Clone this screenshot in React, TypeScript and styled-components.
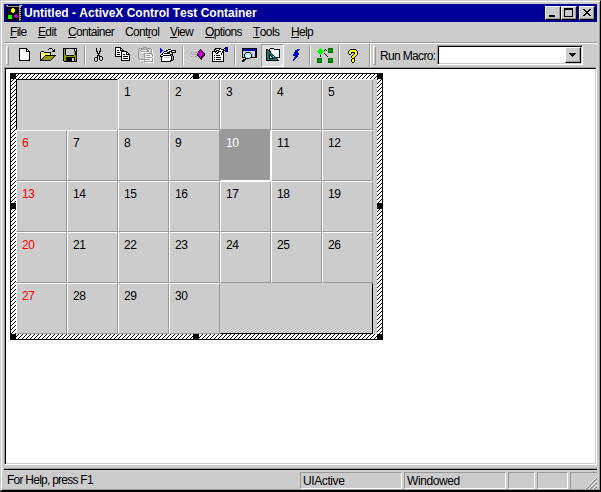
import React from "react";
import styled, { createGlobalStyle, css } from "styled-components";

const FACE = "#cccccc";
const SHADOW = "#999999";

const GlobalStyle = createGlobalStyle`
  * { box-sizing: border-box; }
  html, body { margin: 0; padding: 0; background: ${FACE}; overflow: hidden; }
  body { font: 12px/14px "Liberation Sans", Arial, sans-serif; font-kerning: none; color: #000; }
`;

const HATCH = `url("data:image/svg+xml,%3Csvg xmlns='http://www.w3.org/2000/svg' width='4' height='4' shape-rendering='crispEdges'%3E%3Cpath fill='%23fff' d='M0 0h4v4H0z'/%3E%3Cpath d='M0 3h1v1H0zM1 2h1v1H1zM2 1h1v1H2zM3 0h1v1H3z'/%3E%3C/svg%3E")`;

const Window = styled.div`
  width: 601px;
  height: 492px;
  display: flex;
  flex-direction: column;
  background: ${FACE};
  padding: 2px 2px 0 2px;
  border-style: solid;
  border-width: 1px 1px 2px 1px;
  border-color: ${FACE} #000 #000 ${FACE};
  box-shadow: inset 1px 1px #fff, inset -1px -1px ${SHADOW};
`;

const TitleBar = styled.header`
  height: 18px;
  margin: 1px 0 0 1px;
  width: 593px;
  flex: none;
  display: flex;
  align-items: center;
  background: #000099;
  color: #fff;
  padding: 0 2px;
`;

const Title = styled.h1`
  flex: 1;
  margin: 0 0 0 2px;
  font-size: 12px;
  line-height: 16px;
  font-weight: bold;
  letter-spacing: 0;
  white-space: nowrap;
`;

const raised = css`
  background: ${FACE};
  border: 1px solid;
  border-color: #fff #000 #000 #fff;
  box-shadow: inset -1px -1px ${SHADOW};
`;

const CaptionButton = styled.button<{ $gap?: number }>`
  ${raised}
  width: 16px;
  height: 14px;
  padding: 0;
  margin-left: ${(p) => p.$gap ?? 0}px;
  display: flex;
`;

const MenuBar = styled.nav`
  height: 22px;
  flex: none;
  margin: 0 1px;
  padding: 3px 0 0 6px;
  display: flex;
  border-bottom: 1px solid #fff;
  box-shadow: inset 0 -1px ${SHADOW};
`;

const MenuItem = styled.span<{ $w: number; $track: number }>`
  width: ${(p) => p.$w}px;
  flex: none;
  white-space: nowrap;
  letter-spacing: ${(p) => p.$track}px;
  u { text-decoration-thickness: 1px; text-underline-offset: 1px; }
`;

const ToolBar = styled.div`
  height: 23px;
  flex: none;
  margin-left: 1px;
  padding-left: 2px;
  display: flex;
  align-items: flex-start;
`;

const Grip = styled.i`
  width: 3px;
  height: 19px;
  flex: none;
  margin: 2px 4px 0 0;
  border: 1px solid;
  border-color: #fff ${SHADOW} ${SHADOW} #fff;
`;

const ToolButton = styled.button<{ $pressed?: boolean }>`
  width: 23px;
  height: 23px;
  flex: none;
  padding: ${(p) => (p.$pressed ? "2px 0 0 2px" : "3px 0 0 3px")};
  border: 0;
  background: none;
  display: flex;
  ${(p) =>
    p.$pressed &&
    css`
      background: #dedede;
      border: 1px solid;
      border-color: ${SHADOW} #fff #fff ${SHADOW};
    `}
`;

const Separator = styled.i`
  width: 2px;
  height: 19px;
  flex: none;
  margin: 2px 2px 0;
  background: linear-gradient(90deg, ${SHADOW} 50%, #fff 50%);
`;

const BandEdge = styled(Separator)`
  height: 23px;
  margin: 0 2px 0 4px;
`;

const MacroLabel = styled.label`
  margin: 5px 0 0;
  width: 57px;
  flex: none;
  white-space: nowrap;
  letter-spacing: -0.65px;
`;

const Combo = styled.div`
  width: 146px;
  height: 20px;
  margin-top: 1px;
  padding: 1px;
  display: flex;
  justify-content: flex-end;
  background: #fff;
  border: 1px solid;
  border-color: ${SHADOW} #fff #fff ${SHADOW};
  box-shadow: inset 1px 1px #000, inset -1px -1px ${FACE};
`;

const DropButton = styled.button`
  ${raised}
  width: 16px;
  height: 16px;
  padding: 0;
  display: flex;
`;

const Client = styled.main`
  height: 398px;
  width: 593px;
  flex: none;
  margin-left: 1px;
  padding: 5px 0 0 5px;
  background: #fff;
  border: 1px solid;
  border-color: ${SHADOW} #fff #fff ${SHADOW};
  box-shadow: inset 1px 1px #000, inset -1px -1px ${FACE};
`;

const SiteFrame = styled.section`
  position: relative;
  width: 373px;
  height: 267px;
  padding: 5px;
  border: 1px solid #000;
  background: ${HATCH};
`;

const Handle = styled.i<{ $x: number; $y: number }>`
  position: absolute;
  left: ${(p) => p.$x - 1}px;
  top: ${(p) => p.$y - 1}px;
  width: 6px;
  height: 6px;
  background: #000;
`;

const Calendar = styled.div`
  width: 361px;
  height: 255px;
  display: grid;
  grid-template-columns: repeat(7, 51px);
  grid-auto-rows: 51px;
  background: ${FACE};
`;

type Kind = "day" | "today" | "lead" | "trail";

const borders: Record<Kind, ReturnType<typeof css>> = {
  day: css`
    border-color: #fff ${SHADOW} ${SHADOW} #fff;
  `,
  today: css`
    background: ${SHADOW};
    border-color: ${SHADOW} #fff #fff ${SHADOW};
    color: #fff;
  `,
  lead: css`
    grid-column: span 2;
    border-color: #000 ${FACE} ${FACE} #000;
  `,
  trail: css`
    grid-column: span 3;
    border-color: ${FACE} #000 #000 ${FACE};
  `,
};

const Cell = styled.div<{ $kind: Kind; $sunday?: boolean }>`
  border: 1px solid;
  padding: 5px 0 0 5px;
  letter-spacing: -0.5px;
  ${(p) => borders[p.$kind]}
  ${(p) => p.$sunday && "color: #ff0000;"}
`;

const Status = styled.footer`
  height: 22px;
  margin: 3px 1px 0;
  flex: none;
  display: flex;
  align-items: flex-start;
  border-top: 1px solid ${SHADOW};
  box-shadow: inset 0 1px #000;
  padding-top: 3px;
  letter-spacing: -0.4px;
`;

const Message = styled.span`
  width: 296px;
  flex: none;
  padding: 1px 0 0 3px;
  letter-spacing: -0.75px;
`;

const Pane = styled.span<{ $w: number }>`
  width: ${(p) => p.$w}px;
  height: 17px;
  flex: none;
  margin-right: 2px;
  padding: 1px 0 0 2px;
  border: 1px solid;
  border-color: ${SHADOW} #fff #fff ${SHADOW};
  display: flex;
  justify-content: space-between;
`;

const GripPane = styled(Pane)`
  border-right: 0;
  border-bottom: 0;
  margin-right: 0;
`;

const Svg = styled.svg`
  display: block;
  flex: none;
`;

const INK: Record<string, string> = {
  k: "#000", w: "#fff", y: "#ffff66", Y: "#ffff00", o: "#999900", g: "#999999",
  s: "#cccccc", b: "#000099", B: "#0000ff", m: "#cc00cc", p: "#800080", t: "#008080",
  c: "#99ffff", n: "#009900", G: "#00ff00", d: "#006600",
};

function Pixels({ rows, w = 17 }: { rows: string[]; w?: number }) {
  return (
    <Svg width={w} height={rows.length} shapeRendering="crispEdges">
      {rows.flatMap((row, y) =>
        (row.match(/(.)\1*/g) ?? []).reduce<{ x: number; out: React.ReactNode[] }>(
          (acc, run) => {
            const fill = INK[run[0]];
            if (fill) acc.out.push(<rect key={`${y}-${acc.x}`} x={acc.x} y={y} width={run.length} height={1} fill={fill} />);
            acc.x += run.length;
            return acc;
          },
          { x: 0, out: [] },
        ).out,
      )}
    </Svg>
  );
}

const art: Record<string, string[]> = {
  app: [
    "gskkkkkkkkkkkgss", "kggggggggggggggk", "kkkkkkkkkkkkkgsk", "kkkbkkYYkkbkkgkk",
    "kkbkkYYYYkkkkgsk", "kkbkkYYYYkkbkgkk", "kkkkkYYYYkkkkgsk", "kkkkkkYYkkkkkgkk",
    "kkbkkkkkkkkkkgsk", "kkkkkkkkkmmkkgkk", "kkGGGGkkmmmmkgsk", "kkGGGGkkmmmmkgkk",
    "kkGGGGkkkmmkkgsk", "kkGGGGkbkkkkkgkk", "kkkkkkkkkbbkkgsk", "kkkkkkkkkkkkkgkk",
  ],
  new: [
    "", "...kkkkkkkk", "...kwwwwwwkk", "...kwwwwwwkwk", "...kwwwwwwkkkk",
    ...Array(8).fill("...kwwwwwwwwwk"), "...kkkkkkkkkkk",
  ],
  open: [
    "", "..........kkk", ".........k...k.k", "..............kk", "..kkk........kkk",
    ".kyyykkkkkkk", ".kyyyyyyyyyk", ".kyyyyyyyyyk", ".kyyyykkkkkkkkkkk", ".kyyykoooooooook",
    ".kyykoooooooook", ".kykoooooooook", ".kkoooooooook", ".kkkkkkkkkkk",
  ],
  save: [
    "", ".kkkkkkkkkkkkkk", ".kokssssssssksk", ".kokssssssssksk", ".kokssssssssokk", ".kokssssssssokk",
    ".kokssssssssokk", ".kokssssssssokk", ".kookkkkkkkkook", ".kooooooooooook",
    ".kookkkkkkkkkok", ".kookkkkkksskok", ".kookkkkkksskok", ".kookkkkkksskok", "..kkkkkkkkkkkkk",
  ],
  cut: [
    "", ".....k...k", ".....k...k", ".....k...k", ".....kk.kk", "......k.k", "......kkk", ".......k",
    "......kkk", "......k.kkk", "....kkk.k..k", "...k..k.k..k", "...k..k.k..k", "...k..k..kk", "....kk",
  ],
  copy: [
    ".kkkkkk", ".kwwwwkk", ".kwwwwkwk", ".kwkkwkkkk", ".kwwwwwkkkkkk", ".kwkkkwkwwwwkk", ".kwwwwwkwwwwkwk",
    ".kwkkkwkwkkwkkkk", ".kwwwwwkwwwwwwwk", ".kkkkkkkwkkkkkwk", ".......kwwwwwwwk", ".......kwkkkkkwk",
    ".......kwwwwwwwk", ".......kkkkkkkkk",
  ],
  paste: [
    "......gggg", "..ggggg..ggggg", ".gssgggggggwssg", ".gsgwwwwwwggwsgw", ".gssggggggggwsgw", ".gsswwwwwwwwssgw",
    ".gsssssggggggggw", ".gsssssgwwwwwwggw", ".gsssssgwggggwwgw", ".gsssssgwwwwwwwgw", ".gsssssgwggggggw",
    ".gsssssgwwwwwwwgw", "..gggggggggggwwgw", "...wwwwgwwwwwwwgw", ".......gggggggggw", "........wwwwwwwww",
  ],
  control: [
    "", "B", "BB......kkk", "BBB...kkwwwkkkkk", "BB..kkkwwkkkwwwk", "B..kwwwkkkwkkkkk", "..kwkkkkkkwwk", ".kkwwwwwwwkkk",
    "kwwkkkkkkkkgk", "kkkwwwwwwwwkgk", ".kwwsssssswkgk", ".kwwwwwwwwwkgk", ".kwwwwwwwwwkgk", ".kwwwwwwwwkkk", ".kkkkkkkkkk",
  ],
  method: [
    "", "", "...........k", "..........kmk", ".........kmmmk", "..g.g.gg.kmmmmk", "........kmmmmmpk", ".g.g.gg.kmmmmppk",
    "........kpmmmppk", "..g.g.gg.kpmppk", "..........kppk", "...........kk", "............k",
  ],
  props: [
    ".............bbb", "...kkkkkk...kbbb", "..kkwwwkwkkk.bbb", "..kwkkkwwwwkkbbb", "kkkkkwkkkwkk.bbb",
    "kwwkwkkwwwkk", "kwwwkkwwwkwk", "kwwwwwwwwkwk", "kwkwkkkkwwwk", "kwwwwwwwwwwk", "kwkwkkkkkwwk",
    "kwwwwwwwwwwk", "kwkwkkkkkwwk", "kwwwwwwwwwwk", "kkkkkkkkkkkk",
  ],
  log: [
    "", ".kkkkkkkkkkkkkkk", ".kbbbbbbbbbbbbbk", ".kbbbbbbbbbbbbbk", ".kssssssssssssbk", ".kssskkkksssssbk", ".ksskccwckssssbk",
    ".kskcwccwcksssbk", ".kskccwcwcksssbk", ".kskcwccwckssskk", ".kkkkccwckkkkkkk", "....kkkkk", "..kkk", ".kkk", ".kk",
  ],
  folders: [
    "", "......kkkk", "..kk.kcccckkkkkk", "..ktkkwwwwwwwwck", "..kttkkwwwwwwwck", "..ktttkwwwwwwwck", "..kttttkwwwwwwck",
    "..kttkttkwwwwwck", "..kttkkttkwwwwck", "..kttksktckwwwck", "..kttksskttkkkkk", "..kttkkkkkttk", "..kttttttttttk", "..kkkkkkkkkkkkk",
  ],
  bolt: [
    "", "", "..........bbb", "........bbBb", "........bBb", ".......bBBb", ".......bBbbb", "......bBBBBb", "......bbbBb",
    "........bBb", ".......bBb", ".......bb", "......bb", "......b",
  ],
  links: [
    "", "....G.......ddddd", "...GGG...k..dnnnd", "..GGGGG.k.k.dnnnd", ".GGGGGGG....dnnnd", "..GGGGG.....ddddd", "...GGG..k",
    "....G....k", "....k.....k", "....k......k", "", ".ddddd......ddddd", ".dnnnd......dnnnd", ".dnnnd......dnnnd", ".dnnnd......dnnnd", ".ddddd......ddddd",
  ],
  help: [
    "", "", ".....kkkkkk", "....kYYYYYYk", "...kYYYYYYYYk", "...kYYkkkkYYk", "...kYYk..kYYk", "....kk..kYYYk", ".......kYYYk",
    "......kYYYk", "......kYYk", ".......kkk", "......kYYk", "......kYYk", "......kYYk", ".......kk",
  ],
  min: ["", "", "", "", "", "", "", "", "...kkkkkk", "...kkkkkk"],
  max: ["", "..kkkkkkkkk", "..kkkkkkkkk", ...Array(6).fill("..k.......k"), "..kkkkkkkkk"],
  close: ["", "", "...kk....kk", "....kk..kk", ".....kkkk", "......kk", ".....kkkk", "....kk..kk", "...kk....kk"],
  down: ["", "", "", "", "", "...kkkkkkk", "....kkkkk", ".....kkk", "......k"],
  size: [
    "", "", "", "..............w", ".............wg", "............wgg", "...........wgg.", "..........wgg.w", ".........wgg.wg",
    "........wgg.wgg", ".......wgg.wgg.", "......wgg.wgg.w", ".....wgg.wgg.wg", "....wgg.wgg.wgg", "...wgg.wgg.wgg.",
  ],
};

const menus: { before?: string; rest: string; width: number; track: number }[] = [
  { rest: "File", width: 28, track: -0.7 },
  { rest: "Edit", width: 30, track: -0.65 },
  { rest: "Container", width: 57, track: -0.65 },
  { before: "Cont", rest: "rol", width: 45, track: -0.65 },
  { rest: "View", width: 35, track: -0.8 },
  { rest: "Options", width: 48, track: -0.65 },
  { rest: "Tools", width: 38, track: -0.6 },
  { rest: "Help", width: 30, track: -0.65 },
];

const toolGroups = [["new", "open", "save"], ["cut", "copy", "paste", "control"], ["method", "props"], ["log", "folders", "bolt"], ["links"], ["help"]];

const handles = [0, 183, 367].flatMap((x) => [0, 130, 261].map((y) => [x, y])).filter(([x, y]) => !(x === 183 && y === 130));

export default function App() {
  return (
    <Window>
      <GlobalStyle />
      <TitleBar>
        <Pixels rows={art.app} w={16} />
        <Title>Untitled - ActiveX Control Test Container</Title>
        <CaptionButton aria-label="Minimize"><Pixels rows={art.min} w={14} /></CaptionButton>
        <CaptionButton aria-label="Maximize"><Pixels rows={art.max} w={14} /></CaptionButton>
        <CaptionButton aria-label="Close" $gap={2}><Pixels rows={art.close} w={14} /></CaptionButton>
      </TitleBar>
      <MenuBar>
        {menus.map(({ before, rest, width, track }) => (
          <MenuItem key={rest} $w={width} $track={track}>{before}<u>{rest[0]}</u>{rest.slice(1)}</MenuItem>
        ))}
      </MenuBar>
      <ToolBar>
        <Grip />
        {toolGroups.map((group, i) => (
          <React.Fragment key={group[0]}>
            {i > 0 && <Separator />}
            {group.map((name) => (
              <ToolButton key={name} aria-label={name} $pressed={name === "folders"}><Pixels rows={art[name]} /></ToolButton>
            ))}
          </React.Fragment>
        ))}
        <BandEdge />
        <Grip />
        <MacroLabel>Run Macro:</MacroLabel>
        <Combo><DropButton aria-label="Choose macro"><Pixels rows={art.down} w={14} /></DropButton></Combo>
      </ToolBar>
      <Client>
        <SiteFrame>
          <Calendar>
            <Cell $kind="lead" />
            {Array.from({ length: 30 }, (_, i) => i + 1).map((day) => (
              <Cell key={day} $kind={day === 10 ? "today" : "day"} $sunday={day % 7 === 6}>{day}</Cell>
            ))}
            <Cell $kind="trail" />
          </Calendar>
          {handles.map(([x, y]) => <Handle key={`${x}-${y}`} $x={x} $y={y} />)}
        </SiteFrame>
      </Client>
      <Status>
        <Message>For Help, press F1</Message>
        <Pane $w={102}>UIActive</Pane>
        <Pane $w={102}>Windowed</Pane>
        <Pane $w={27} />
        <Pane $w={31} />
        <GripPane $w={27}><span /><Pixels rows={art.size} w={15} /></GripPane>
      </Status>
    </Window>
  );
}
